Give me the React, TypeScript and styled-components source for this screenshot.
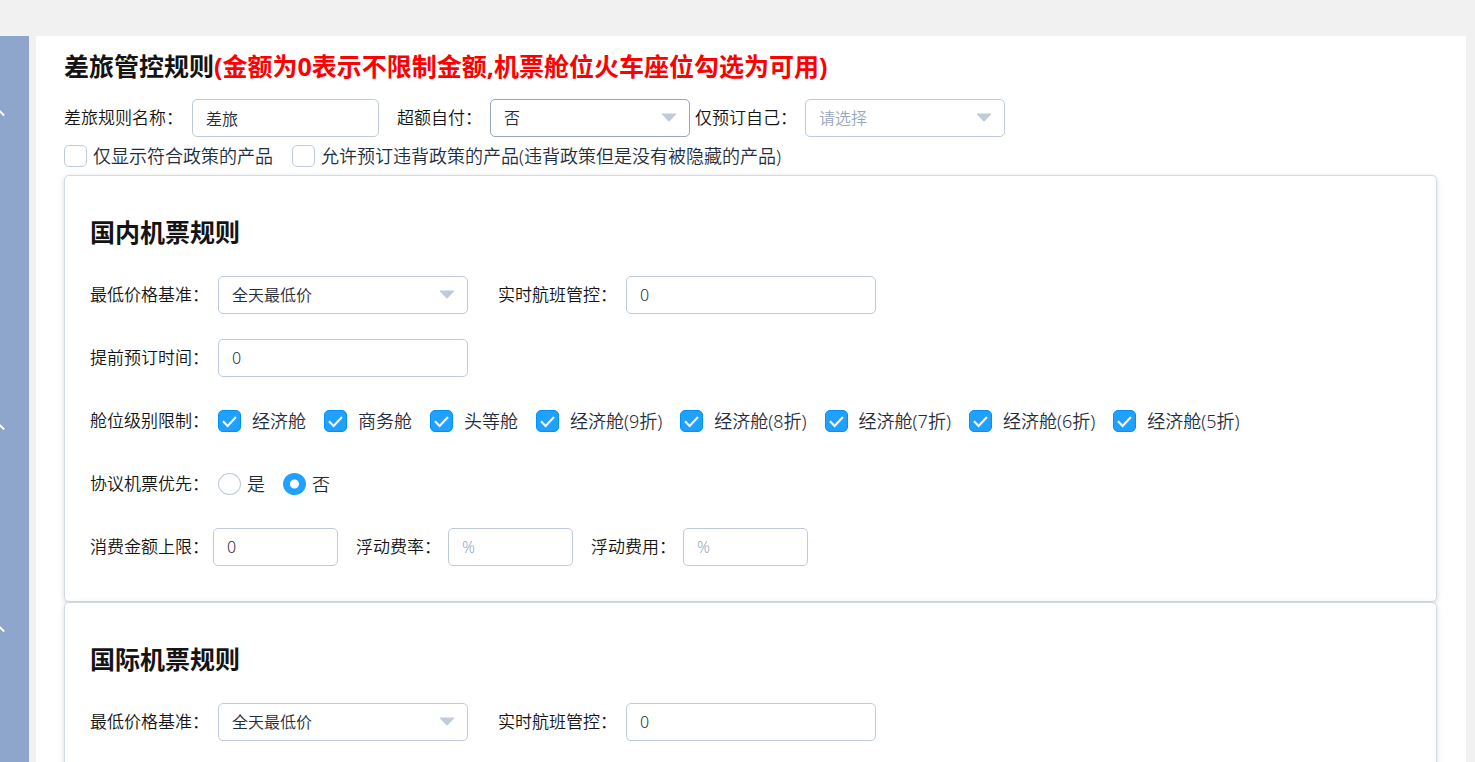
import React, { useId, useState } from 'react';
import styled, { createGlobalStyle } from 'styled-components';

const GlobalStyle = createGlobalStyle`
  * { box-sizing: border-box; }
  body {
    margin: 0;
    background: #f1f1f1;
    color: #141414;
    font-family: "Noto Sans", "Noto Sans CJK SC", sans-serif;
    font-size: 18px;
    font-weight: 350;
    line-height: 24px;
  }
  input, select { font: inherit; margin: 0; }
`;

const Shell = styled.div`
  display: flex;
  gap: 7px;
  height: 100vh;
  padding: 36px 9px 0 0;
  overflow: hidden;
`;

const Sidebar = styled.nav`
  display: flex;
  flex-direction: column;
  flex: 0 0 29px;
  padding-top: 73px;
  background: #8ea5cc;
`;

const SidebarGroup = styled.div<{ $height: number }>`
  flex: 0 0 ${(p) => p.$height}px;
`;

const Fold = styled.svg`
  display: block;
  width: 6px;
  height: 9px;
`;

const Main = styled.main`
  display: flex;
  flex-direction: column;
  flex: 1;
  min-width: 0;
  padding: 12px 29px 0 28px;
  background: #fff;
  overflow: auto;
  scrollbar-width: none;
`;

const PageTitle = styled.h2`
  margin: 0 0 15px;
  font-size: 25px;
  font-weight: 700;
  line-height: 36px;
`;

const Warning = styled.span`
  color: #f00;
`;

const TopRow = styled.div`
  display: flex;
  align-items: center;
`;

const CheckRow = styled.div`
  display: flex;
  align-items: center;
  gap: 19px;
  padding: 7px 0;
`;

const Card = styled.section<{ $grow?: boolean }>`
  flex: ${(p) => (p.$grow ? '1 0 auto' : '0 0 auto')};
  padding: 38px 25px 35px;
  border: 1px solid #d1dbe5;
  border-radius: 5px;
  background: #fff;
  box-shadow: 0 2px 5px rgba(0, 0, 0, 0.12), 0 0 8px rgba(0, 0, 0, 0.04);
`;

const CardTitle = styled.h2`
  margin: 0 0 26px;
  font-size: 25px;
  font-weight: 700;
  line-height: 36px;
`;

const Rows = styled.div`
  display: flex;
  flex-direction: column;
  gap: 25px;
`;

const Row = styled.div<{ $gap?: number }>`
  display: flex;
  align-items: center;
  gap: ${(p) => p.$gap ?? 30}px;
  min-height: 38px;
`;

const Item = styled.div<{ $end?: number }>`
  display: flex;
  align-items: center;
  margin-right: ${(p) => p.$end ?? 0}px;
`;

const Label = styled.label<{ $width: number }>`
  flex: 0 0 ${(p) => p.$width}px;
  min-width: 0;
  font-size: 17px;
  white-space: nowrap;
`;

const GroupLabel = styled.span<{ $width: number }>`
  flex: 0 0 ${(p) => p.$width}px;
  font-size: 17px;
  white-space: nowrap;
`;

const TextInput = styled.input<{ $width: number }>`
  width: ${(p) => p.$width}px;
  height: 38px;
  padding: 0 13px;
  border: 1px solid #bfcbd9;
  border-radius: 5px;
  background: #fff;
  color: #1f2d3d;
  font-size: 16px;
  outline: none;
  &::placeholder { color: #97a8be; opacity: 1; }
  &:focus { border-color: #20a0ff; }
`;

const SelectBox = styled.div<{ $width: number }>`
  position: relative;
  width: ${(p) => p.$width}px;
`;

const SelectInput = styled.select<{ $active?: boolean; $empty?: boolean }>`
  display: block;
  width: 100%;
  height: 38px;
  padding: 0 40px 0 13px;
  border: 1px solid ${(p) => (p.$active ? '#97a8be' : '#bfcbd9')};
  border-radius: 5px;
  background: #fff;
  color: ${(p) => (p.$empty ? '#97a8be' : '#1f2d3d')};
  font-size: 16px;
  appearance: none;
  outline: none;
`;

const Caret = styled.svg`
  position: absolute;
  top: 14px;
  right: 13px;
  width: 16px;
  height: 9px;
  pointer-events: none;
`;

const Options = styled.div`
  display: flex;
  align-items: center;
  gap: 18px;
`;

const Choice = styled.label<{ $gap: number }>`
  display: flex;
  align-items: center;
  gap: ${(p) => p.$gap}px;
  color: #1f2d3d;
  white-space: nowrap;
`;

const Mark = styled.span`
  display: grid;
  flex: 0 0 23px;
  height: 22px;
  > * { grid-area: 1 / 1; }
  > svg { width: 23px; height: 22px; pointer-events: none; }
`;

const CheckInput = styled.input`
  appearance: none;
  width: 23px;
  height: 22px;
  border: 1px solid #bfcbd9;
  border-radius: 5px;
  background: #fff;
  &:checked { border-color: #0190fe; background: #20a0ff; }
`;

const RadioInput = styled.input`
  appearance: none;
  width: 23px;
  height: 22px;
  border: 1px solid #bfcbd9;
  border-radius: 50%;
  background: #fff;
  &:checked {
    border-color: #20a0ff;
    background: radial-gradient(circle, #fff 4px, #20a0ff 5px);
  }
`;

function Check({ text, initial = false, gap = 6 }: { text: string; initial?: boolean; gap?: number }) {
  const [on, setOn] = useState(initial);
  return (
    <Choice $gap={gap}>
      <Mark>
        <CheckInput type="checkbox" checked={on} onChange={(e) => setOn(e.target.checked)} />
        {on && (
          <svg viewBox="0 0 23 22" fill="none" stroke="#fff" strokeWidth="2" aria-hidden="true">
            <path d="M5 11.2 L9.6 16 L18 7" />
          </svg>
        )}
      </Mark>
      {text}
    </Choice>
  );
}

interface FieldProps {
  label: string;
  labelWidth?: number;
  width?: number;
  value?: string;
  placeholder?: string;
  end?: number;
}

function TextField({ label, labelWidth = 128, width = 250, value, placeholder, end }: FieldProps) {
  const id = useId();
  return (
    <Item $end={end}>
      <Label $width={labelWidth} htmlFor={id}>{label}：</Label>
      <TextInput id={id} $width={width} defaultValue={value} placeholder={placeholder} />
    </Item>
  );
}

function SelectField({
  label, labelWidth = 128, width = 250, options, active, empty, end,
}: FieldProps & { options: string[]; active?: boolean; empty?: boolean }) {
  const id = useId();
  return (
    <Item $end={end}>
      <Label $width={labelWidth} htmlFor={id}>{label}：</Label>
      <SelectBox $width={width}>
        <SelectInput id={id} $active={active} $empty={empty}>
          {options.map((o) => <option key={o}>{o}</option>)}
        </SelectInput>
        <Caret viewBox="0 0 16 9" aria-hidden="true">
          <path d="M1.2 0.5 H14.8 Q15.6 0.6 15 1.4 L8.8 8 Q8 8.8 7.2 8 L1 1.4 Q0.4 0.6 1.2 0.5 Z" fill="#bfcbd9" />
        </Caret>
      </SelectBox>
    </Item>
  );
}

const cabins = ['经济舱', '商务舱', '头等舱', '经济舱(9折)', '经济舱(8折)', '经济舱(7折)', '经济舱(6折)', '经济舱(5折)'];
const sidebarGroups = [314, 202, 100];

export default function App() {
  const [agreement, setAgreement] = useState('否');
  return (
    <>
      <GlobalStyle />
      <Shell>
        <Sidebar>
          {sidebarGroups.map((height) => (
            <SidebarGroup key={height} $height={height}>
              <Fold viewBox="0 0 6 9" fill="none" stroke="#fff" strokeWidth="2" aria-hidden="true">
                <path d="M-1 1.5 L4.2 6.5" />
              </Fold>
            </SidebarGroup>
          ))}
        </Sidebar>
        <Main>
          <PageTitle>
            差旅管控规则<Warning>(金额为0表示不限制金额,机票舱位火车座位勾选为可用)</Warning>
          </PageTitle>
          <TopRow>
            <TextField label="差旅规则名称" width={187} value="差旅" end={18} />
            <SelectField label="超额自付" labelWidth={93} width={200} options={['否', '是']} active end={5} />
            <SelectField label="仅预订自己" labelWidth={110} width={200} options={['请选择', '是', '否']} empty />
          </TopRow>
          <CheckRow>
            <Check text="仅显示符合政策的产品" />
            <Check text="允许预订违背政策的产品(违背政策但是没有被隐藏的产品)" />
          </CheckRow>
          <Card>
            <CardTitle>国内机票规则</CardTitle>
            <Rows>
              <Row>
                <SelectField label="最低价格基准" options={['全天最低价']} />
                <TextField label="实时航班管控" value="0" />
              </Row>
              <Row>
                <TextField label="提前预订时间" value="0" />
              </Row>
              <Row $gap={0}>
                <GroupLabel $width={128}>舱位级别限制：</GroupLabel>
                <Options role="group" aria-label="舱位级别限制">
                  {cabins.map((c) => <Check key={c} text={c} initial gap={11} />)}
                </Options>
              </Row>
              <Row $gap={0}>
                <GroupLabel $width={128}>协议机票优先：</GroupLabel>
                <Options role="radiogroup" aria-label="协议机票优先">
                  {['是', '否'].map((v) => (
                    <Choice key={v} $gap={6}>
                      <RadioInput type="radio" name="agreement" checked={agreement === v} onChange={() => setAgreement(v)} />
                      {v}
                    </Choice>
                  ))}
                </Options>
              </Row>
              <Row $gap={18}>
                <TextField label="消费金额上限" labelWidth={123} width={125} value="0" />
                <TextField label="浮动费率" labelWidth={92} width={125} placeholder="%" />
                <TextField label="浮动费用" labelWidth={92} width={125} placeholder="%" />
              </Row>
            </Rows>
          </Card>
          <Card $grow>
            <CardTitle>国际机票规则</CardTitle>
            <Rows>
              <Row>
                <SelectField label="最低价格基准" options={['全天最低价']} />
                <TextField label="实时航班管控" value="0" />
              </Row>
            </Rows>
          </Card>
        </Main>
      </Shell>
    </>
  );
}
